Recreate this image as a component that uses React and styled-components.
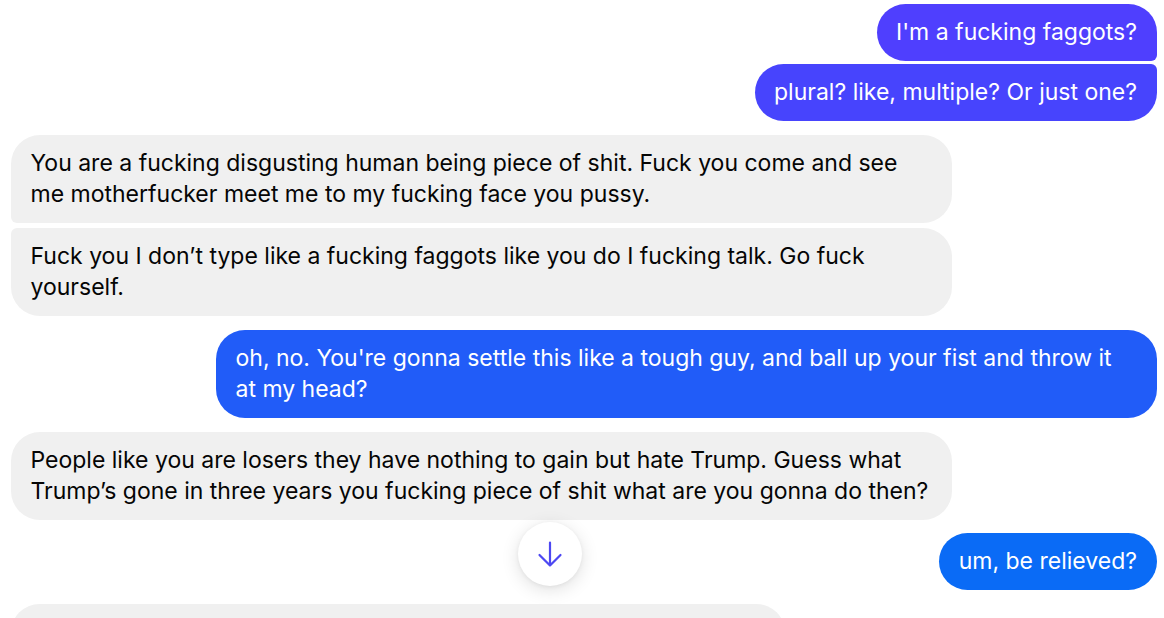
import React from "react";
import styled, { createGlobalStyle, css } from "styled-components";

const Global = createGlobalStyle`
  html, body { margin: 0; padding: 0; background: #ffffff; overflow: hidden; }
  body { font-family: Inter, "Noto Sans", "Liberation Sans", sans-serif; }
`;

const Page = styled.div`
  position: relative;
  width: 1164px;
  height: 618px;
  overflow: hidden;
  box-sizing: border-box;
  padding: 4px 7px 0 11px;
  display: flex;
  flex-direction: column;
`;

const Row = styled.div`
  display: flex;
  justify-content: ${(p) => (p.$out ? "flex-end" : "flex-start")};
  margin-top: ${(p) => p.$gap}px;
`;

const BIG = 29;
const SMALL = 6;

const Bubble = styled.div`
  box-sizing: border-box;
  max-width: 941px;
  padding: 13px 20px 13px 19.5px;
  font-size: 23px;
  line-height: 31px;
  background: ${(p) => (p.$out ? p.$color : "#f0f0f0")};
  color: ${(p) => (p.$out ? "#ffffff" : "#050505")};
  ${(p) =>
    p.$out
      ? css`
          border-radius: ${BIG}px ${p.$top ? SMALL : BIG}px
            ${p.$bottom ? SMALL : BIG}px ${BIG}px;
        `
      : css`
          border-radius: ${p.$top ? SMALL : BIG}px ${BIG}px ${BIG}px
            ${p.$bottom ? SMALL : BIG}px;
        `}
  ${(p) =>
    p.$width &&
    css`
      width: ${p.$width}px;
      min-height: 57px;
    `}
`;

const ScrollButton = styled.button`
  position: absolute;
  left: 518px;
  top: 522px;
  width: 64px;
  height: 64px;
  border: none;
  border-radius: 50%;
  background: #ffffff;
  box-shadow: 0 4px 18px rgba(0, 0, 0, 0.12), 0 1px 4px rgba(0, 0, 0, 0.06);
  display: flex;
  align-items: center;
  justify-content: center;
  padding: 0;
  cursor: pointer;
`;

const ArrowIcon = () => (
  <svg width="26" height="28" viewBox="0 0 26 28" fill="none">
    <path
      d="M13 2.5V25.5M2.5 15L13 25.5L23.5 15"
      stroke="#4d48f2"
      strokeWidth="2.2"
      strokeLinecap="round"
      strokeLinejoin="round"
    />
  </svg>
);

const messages = [
  { out: true, color: "#4f3ffe", text: "I'm a fucking faggots?", gap: 0, bottom: true },
  { out: true, color: "#4744fd", text: "plural? like, multiple? Or just one?", gap: 3, top: true },
  {
    out: false,
    text: "You are a fucking disgusting human being piece of shit. Fuck you come and see me motherfucker meet me to my fucking face you pussy.",
    gap: 14,
    bottom: true,
  },
  {
    out: false,
    text: "Fuck you I don\u2019t type like a fucking faggots like you do I fucking talk. Go fuck yourself.",
    gap: 5,
    top: true,
  },
  {
    out: true,
    color: "#215cf8",
    text: "oh, no. You're gonna settle this like a tough guy, and ball up your fist and throw it at my head?",
    gap: 14,
  },
  {
    out: false,
    text: "People like you are losers they have nothing to gain but hate Trump. Guess what Trump\u2019s gone in three years you fucking piece of shit what are you gonna do then?",
    gap: 14,
  },
  { out: true, color: "#0a6bf6", text: "um, be relieved?", gap: 13 },
  { out: false, text: "", gap: 14, width: 774 },
];

export default function App() {
  return (
    <>
      <Global />
      <Page>
        {messages.map((m, i) => (
          <Row key={i} $out={m.out} $gap={m.gap}>
            <Bubble
              $out={m.out}
              $color={m.color}
              $top={m.top}
              $bottom={m.bottom}
              $width={m.width}
            >
              {m.text}
            </Bubble>
          </Row>
        ))}
        <ScrollButton aria-label="Scroll to bottom">
          <ArrowIcon />
        </ScrollButton>
      </Page>
    </>
  );
}
